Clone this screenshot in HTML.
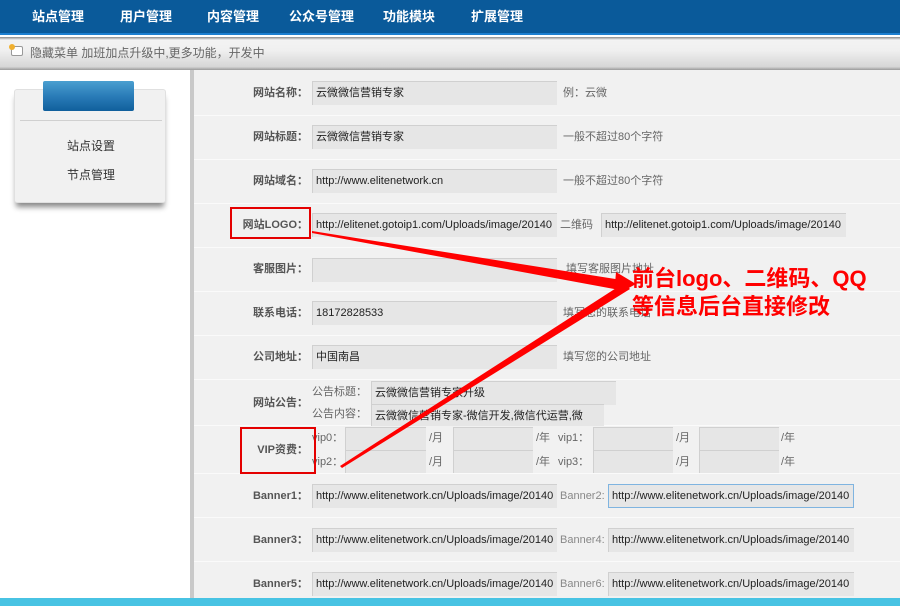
<!DOCTYPE html>
<html><head><meta charset="utf-8">
<style>
*{margin:0;padding:0;box-sizing:border-box}
body{width:900px;height:606px;overflow:hidden;background:#fff;font-family:"Liberation Sans","Noto Sans CJK SC",sans-serif;font-size:12px;color:#333;position:relative;line-height:14px}
.a{position:absolute;white-space:nowrap}
#nav{left:0;top:0;width:900px;height:35px;background:#0a5a9a;border-bottom:2px solid #1c7fd0}
#nav span{position:absolute;top:10px;color:#fff;font-weight:bold;font-size:13px}
#sub{left:0;top:37px;width:900px;height:33px;background:linear-gradient(#8a8a8a 0,#f3f3f3 3px,#f0f0f0 40%,#d6d6d6 90%,#9a9a9a 100%)}
#main{left:190px;top:70px;width:710px;height:528px;background:#f1f1f1;border-left:4px solid #c9c9c9}
.sep{position:absolute;left:194px;width:706px;height:1px;background:#dcdcdc;border-bottom:1px solid #fafafa}
.lab{position:absolute;text-align:right;width:116px;left:192px;font-size:11px;font-weight:bold;color:#555;line-height:14px}
.inp{position:absolute;height:24px;background:#e6e6e6;border-top:1px solid #d0d0d0;border-left:1px solid #d0d0d0;padding:4px 0 0 3px;font-size:11px;color:#222;overflow:hidden;white-space:nowrap;line-height:14px}
.hint{position:absolute;color:#666;font-size:11px;line-height:14px;white-space:nowrap}
.red{position:absolute;border:2px solid #e40000}
</style></head><body>
<div id="nav" class="a">
<span style="left:32px">站点管理</span><span style="left:120px">用户管理</span><span style="left:207px">内容管理</span><span style="left:289px">公众号管理</span><span style="left:383px">功能模块</span><span style="left:471px">扩展管理</span>
</div>
<div id="sub" class="a"><span class="a" style="left:11px;top:9px;width:12px;height:10px;border:1px solid #999;background:#fff;border-radius:2px"></span><span class="a" style="left:9px;top:7px;width:6px;height:6px;background:#f0b030;border-radius:50%"></span><span class="a" style="left:30px;top:9px;color:#666">隐藏菜单 加班加点升级中,更多功能，开发中</span></div>

<div class="a" style="left:14px;top:89px;width:152px;height:114px;background:#f1f1f1;border:1px solid #e0e0e0;border-radius:3px;box-shadow:0 6px 6px -2px #888"></div>
<div class="a" style="left:43px;top:81px;width:91px;height:30px;background:linear-gradient(#4a9fd0,#2a7cb8 50%,#105f9c);border-radius:2px"></div>
<div class="a" style="left:20px;top:120px;width:142px;height:1px;background:#d0d0d0"></div>
<div class="a" style="left:67px;top:139px;font-size:12px;color:#333">站点设置</div>
<div class="a" style="left:67px;top:168px;font-size:12px;color:#333">节点管理</div>

<div id="main" class="a"></div>
<div class="sep" style="top:115px"></div><div class="sep" style="top:159px"></div><div class="sep" style="top:203px"></div><div class="sep" style="top:247px"></div><div class="sep" style="top:291px"></div><div class="sep" style="top:335px"></div><div class="sep" style="top:379px"></div><div class="sep" style="top:425px"></div><div class="sep" style="top:473px"></div><div class="sep" style="top:517px"></div><div class="sep" style="top:561px"></div>

<div class="lab" style="top:86px">网站名称：</div><div class="inp" style="left:312px;top:81px;width:245px">云微微信营销专家</div><div class="hint" style="left:563px;top:86px">例：云微</div>
<div class="lab" style="top:130px">网站标题：</div><div class="inp" style="left:312px;top:125px;width:245px">云微微信营销专家</div><div class="hint" style="left:563px;top:130px">一般不超过80个字符</div>
<div class="lab" style="top:174px">网站域名：</div><div class="inp" style="left:312px;top:169px;width:245px">http://www.elitenetwork.cn</div><div class="hint" style="left:563px;top:174px">一般不超过80个字符</div>
<div class="lab" style="top:218px">网站LOGO：</div><div class="inp" style="left:312px;top:213px;width:245px">http://elitenet.gotoip1.com/Uploads/image/20140</div><div class="hint" style="left:560px;top:218px">二维码</div><div class="inp" style="left:601px;top:213px;width:245px">http://elitenet.gotoip1.com/Uploads/image/20140</div>
<div class="lab" style="top:262px">客服图片：</div><div class="inp" style="left:312px;top:258px;width:245px"></div><div class="hint" style="left:566px;top:262px">填写客服图片地址</div>
<div class="lab" style="top:306px">联系电话：</div><div class="inp" style="left:312px;top:301px;width:245px">18172828533</div><div class="hint" style="left:563px;top:306px">填写您的联系电话</div>
<div class="lab" style="top:350px">公司地址：</div><div class="inp" style="left:312px;top:345px;width:245px">中国南昌</div><div class="hint" style="left:563px;top:350px">填写您的公司地址</div>
<div class="lab" style="top:396px">网站公告：</div>
<div class="hint" style="left:312px;top:385px">公告标题：</div><div class="inp" style="left:371px;top:381px;width:245px">云微微信营销专家升级</div>
<div class="hint" style="left:312px;top:407px">公告内容：</div><div class="inp" style="left:371px;top:404px;width:233px;height:22px">云微微信营销专家-微信开发,微信代运营,微</div>
<div class="lab" style="top:443px">VIP资费：</div>
<div class="hint" style="left:312px;top:431px">vip0：</div><div class="hint" style="left:312px;top:455px">vip2：</div>
<div class="inp" style="left:345px;top:427px;width:81px;height:23px"></div><div class="inp" style="left:345px;top:450px;width:81px;height:23px"></div>
<div class="hint" style="left:429px;top:431px">/月</div><div class="hint" style="left:429px;top:455px">/月</div>
<div class="inp" style="left:453px;top:427px;width:80px;height:23px"></div><div class="inp" style="left:453px;top:450px;width:80px;height:23px"></div>
<div class="hint" style="left:536px;top:431px">/年</div><div class="hint" style="left:536px;top:455px">/年</div>
<div class="hint" style="left:558px;top:431px">vip1：</div><div class="hint" style="left:558px;top:455px">vip3：</div>
<div class="inp" style="left:593px;top:427px;width:80px;height:23px"></div><div class="inp" style="left:593px;top:450px;width:80px;height:23px"></div>
<div class="hint" style="left:676px;top:431px">/月</div><div class="hint" style="left:676px;top:455px">/月</div>
<div class="inp" style="left:699px;top:427px;width:80px;height:23px"></div><div class="inp" style="left:699px;top:450px;width:80px;height:23px"></div>
<div class="hint" style="left:781px;top:431px">/年</div><div class="hint" style="left:781px;top:455px">/年</div>

<div class="lab" style="top:489px">Banner1：</div><div class="inp" style="left:312px;top:484px;width:245px">http://www.elitenetwork.cn/Uploads/image/20140</div><div class="hint" style="left:560px;top:489px;color:#888">Banner2:</div><div class="inp" style="left:608px;top:484px;width:246px;border:1px solid #7fb4e0">http://www.elitenetwork.cn/Uploads/image/20140</div>
<div class="lab" style="top:533px">Banner3：</div><div class="inp" style="left:312px;top:528px;width:245px">http://www.elitenetwork.cn/Uploads/image/20140</div><div class="hint" style="left:560px;top:533px;color:#888">Banner4:</div><div class="inp" style="left:608px;top:528px;width:246px">http://www.elitenetwork.cn/Uploads/image/20140</div>
<div class="lab" style="top:577px">Banner5：</div><div class="inp" style="left:312px;top:572px;width:245px">http://www.elitenetwork.cn/Uploads/image/20140</div><div class="hint" style="left:560px;top:577px;color:#888">Banner6:</div><div class="inp" style="left:608px;top:572px;width:246px">http://www.elitenetwork.cn/Uploads/image/20140</div>

<div class="a" style="left:0;top:598px;width:900px;height:8px;background:#48c3e3"></div>

<div class="red" style="left:230px;top:207px;width:81px;height:32px"></div>
<div class="red" style="left:240px;top:427px;width:76px;height:47px"></div>
<svg class="a" style="left:0;top:0" width="900" height="606">
<polygon points="312,231 312,233 625,291 628,281" fill="#f00"/>
<polygon points="340,466 342,468 630,289 624,283" fill="#f00"/>
<polygon points="616,272 636,284 614,296" fill="#f00"/>
</svg>
<div class="a" style="left:632px;top:265px;font-size:22px;font-weight:bold;color:#f00;line-height:28px">前台logo、二维码、QQ<br>等信息后台直接修改</div>
</body></html>
